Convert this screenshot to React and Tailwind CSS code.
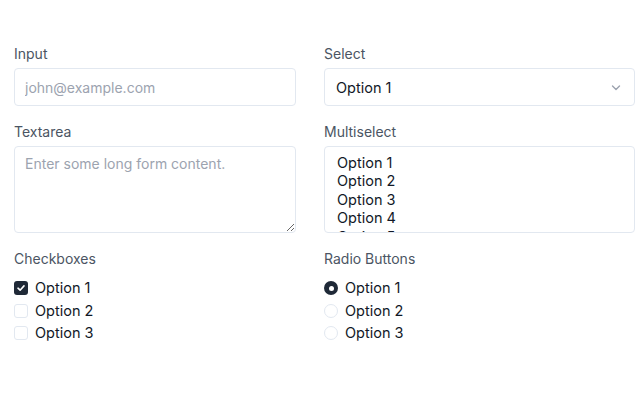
import { useState } from 'react';

const font = { fontFamily: 'Inter, "Noto Sans", sans-serif' };

function Label({ children }) {
  return <div className="text-[14px] leading-5 text-[#4b5563] mb-1">{children}</div>;
}

function Check({ checked, label }) {
  return (
    <div className="flex items-center h-[22.5px] gap-[7px]">
      {checked ? (
        <span className="w-[14px] h-[14px] rounded-[3px] bg-[#1f2937] flex items-center justify-center">
          <svg width="10" height="10" viewBox="0 0 10 10" fill="none">
            <path d="M2 5.2 L4.1 7.2 L8 2.9" stroke="white" strokeWidth="1.6" strokeLinecap="round" strokeLinejoin="round" />
          </svg>
        </span>
      ) : (
        <span className="w-[14px] h-[14px] rounded-[3px] border border-[#e2e8f0] bg-white" />
      )}
      <span className="text-[14.5px] text-[#111827]">{label}</span>
    </div>
  );
}

function Radio({ checked, label }) {
  return (
    <div className="flex items-center h-[22.5px] gap-[7px]">
      {checked ? (
        <span className="w-[14px] h-[14px] rounded-full bg-[#1f2937] flex items-center justify-center">
          <span className="w-[5px] h-[5px] rounded-full bg-white" />
        </span>
      ) : (
        <span className="w-[14px] h-[14px] rounded-full border border-[#e2e8f0] bg-white" />
      )}
      <span className="text-[14.5px] text-[#111827]">{label}</span>
    </div>
  );
}

export default function App() {
  const [text, setText] = useState('');
  return (
    <div className="w-[640px] h-[400px] bg-white pl-[14px] pt-[44px]" style={font}>
      <div className="grid grid-cols-[282px_311px] gap-x-[28px]">
        <div>
          <Label>Input</Label>
          <input
            placeholder="john@example.com"
            className="w-full h-[38px] rounded-[4px] border border-[#e2e8f0] px-[10px] pt-[1px] text-[14px] text-[#111827] placeholder:text-[#9ca3af] outline-none"
          />
        </div>
        <div>
          <Label>Select</Label>
          <div className="w-full h-[38px] rounded-[4px] border border-[#e2e8f0] pl-[11px] pr-[13px] pt-[1px] flex items-center justify-between">
            <span className="text-[14.5px] text-[#111827]">Option 1</span>
            <svg width="10" height="6" viewBox="0 0 10 6" fill="none">
              <path d="M1.5 1 L5 4.5 L8.5 1" stroke="#9ca3af" strokeWidth="1.4" strokeLinecap="round" strokeLinejoin="round" />
            </svg>
          </div>
        </div>

        <div className="mt-4">
          <Label>Textarea</Label>
          <textarea
            value={text}
            onChange={e => setText(e.target.value)}
            placeholder="Enter some long form content."
            className="block w-full h-[87px] rounded-[4px] border border-[#e2e8f0] px-[10px] py-[7px] text-[14px] leading-[20px] text-[#111827] placeholder:text-[#9ca3af] outline-none"
          />
        </div>
        <div className="mt-4">
          <Label>Multiselect</Label>
          <div className="w-full h-[87px] rounded-[4px] border border-[#e2e8f0] overflow-hidden pl-[12px] pt-[7px]">
            {['Option 1', 'Option 2', 'Option 3', 'Option 4', 'Option 5'].map(o => (
              <div key={o} className="text-[14.5px] leading-[18.4px] text-[#111827]">{o}</div>
            ))}
          </div>
        </div>

        <div className="mt-4">
          <Label>Checkboxes</Label>
          <div className="pt-[4px]">
            <Check checked label="Option 1" />
            <Check label="Option 2" />
            <Check label="Option 3" />
          </div>
        </div>
        <div className="mt-4">
          <Label>Radio Buttons</Label>
          <div className="pt-[4px]">
            <Radio checked label="Option 1" />
            <Radio label="Option 2" />
            <Radio label="Option 3" />
          </div>
        </div>
      </div>
    </div>
  );
}
